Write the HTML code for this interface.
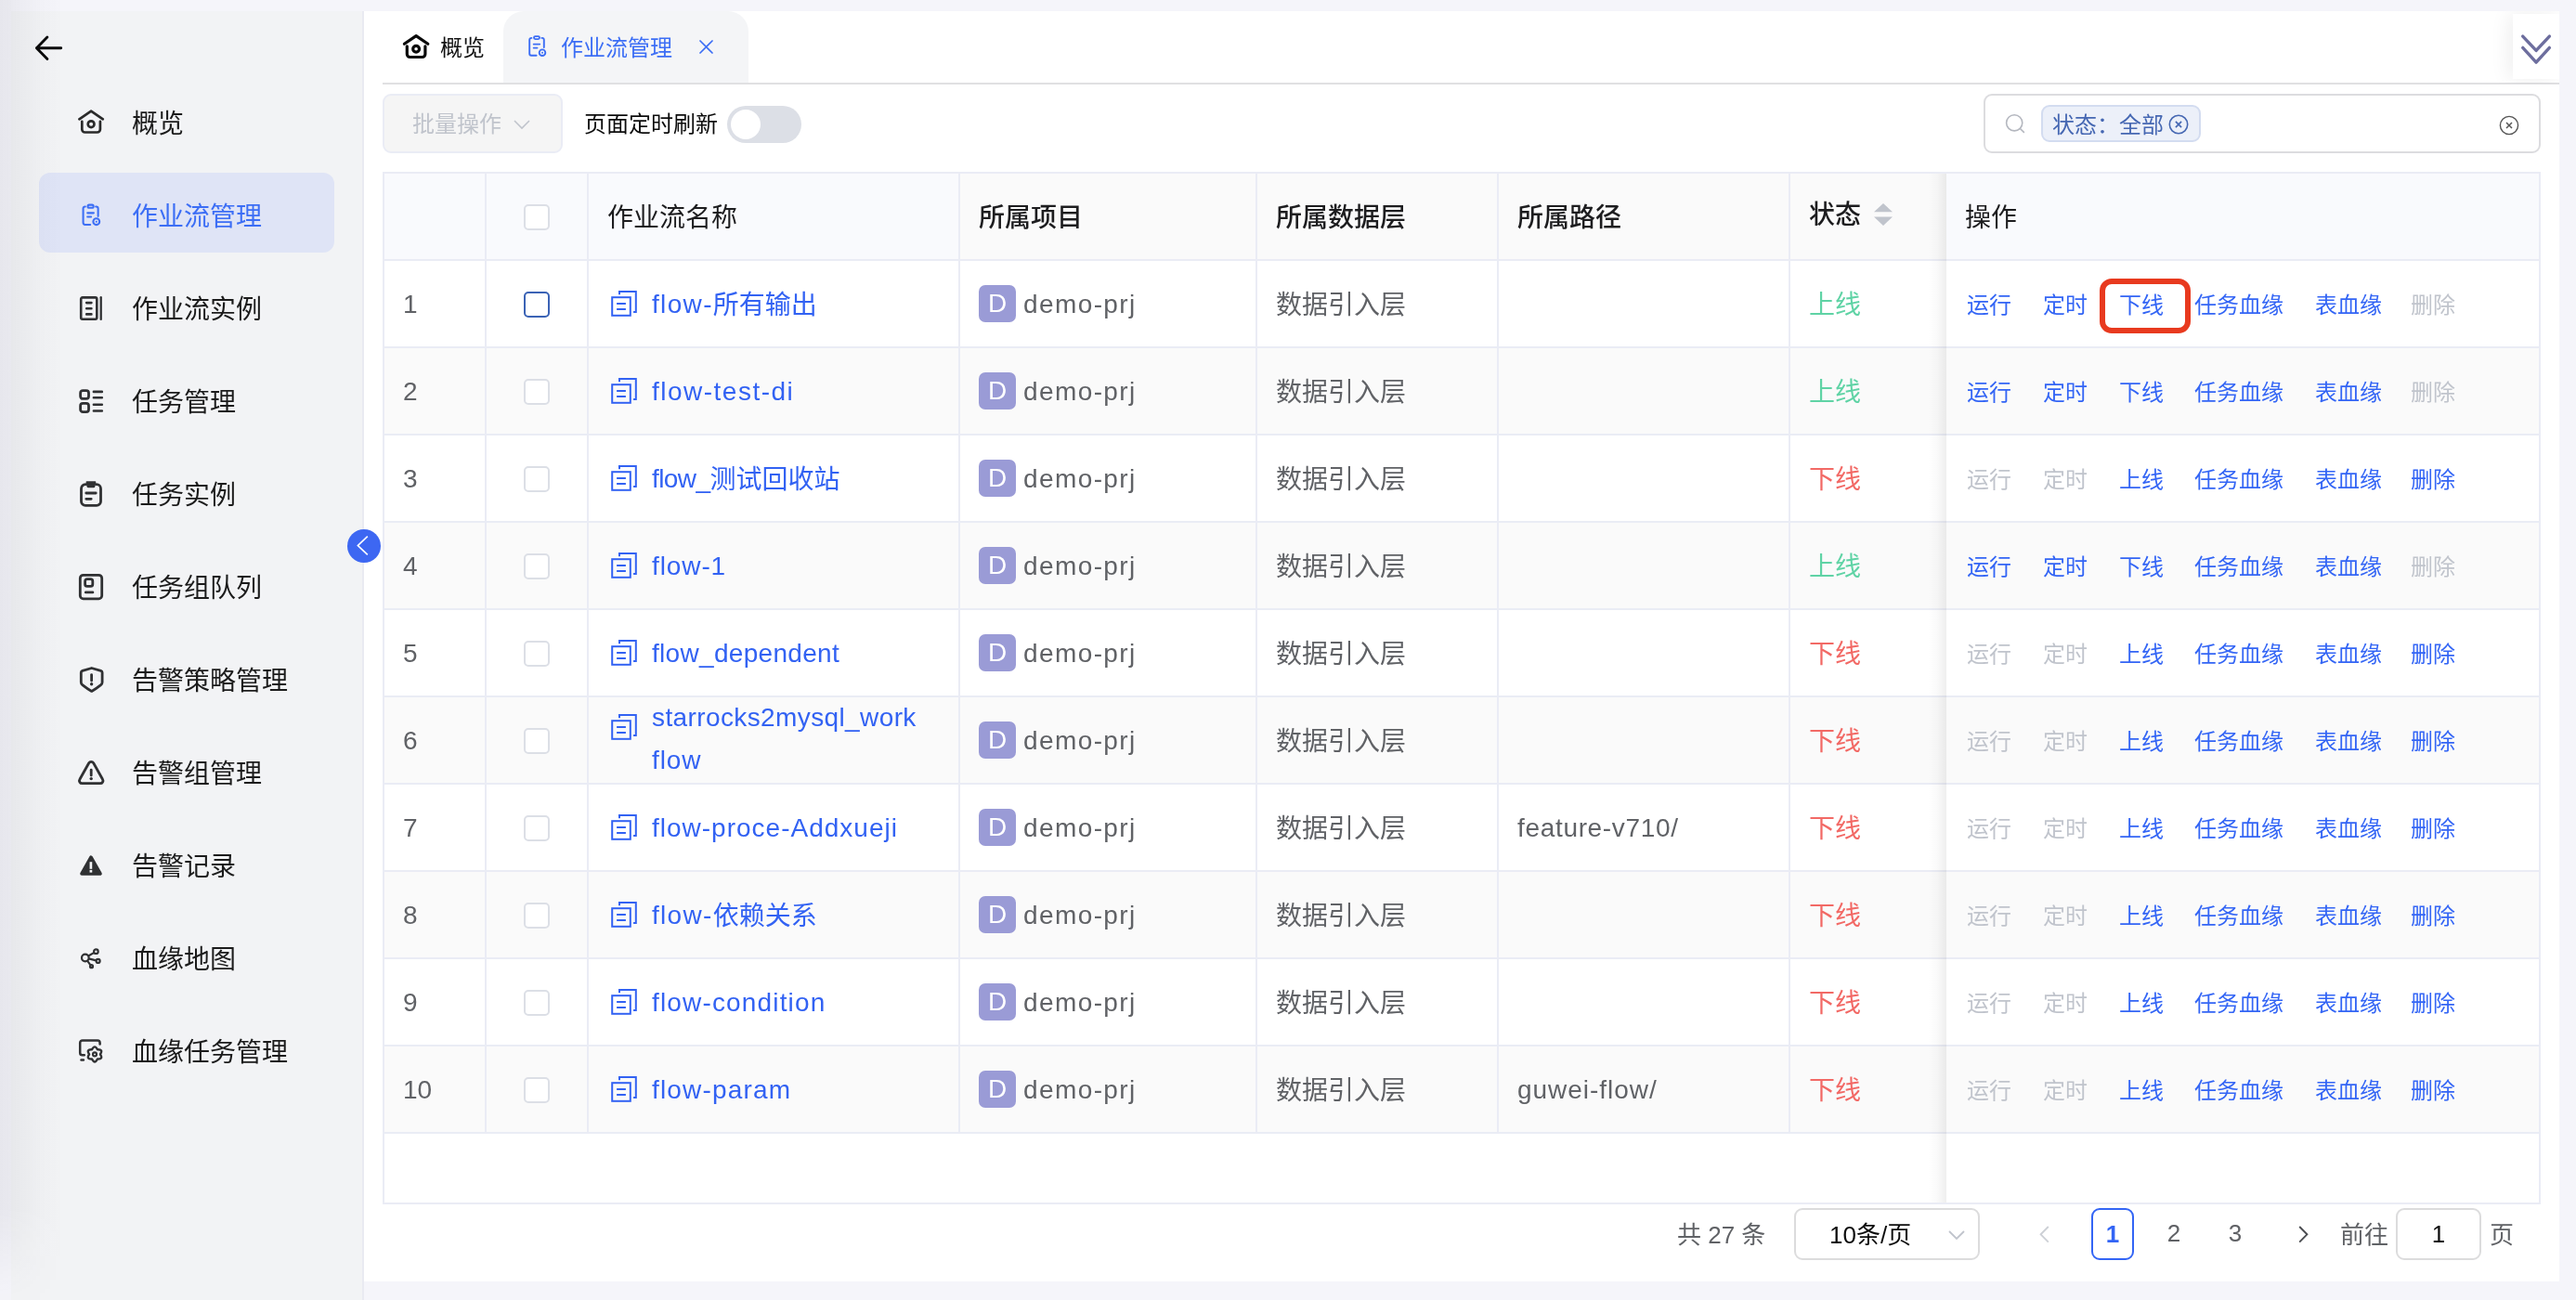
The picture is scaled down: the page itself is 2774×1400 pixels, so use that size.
<!DOCTYPE html><html lang="zh-CN"><head><meta charset="utf-8"><title>作业流管理</title><style>
html,body{margin:0;padding:0}
body{width:2774px;height:1400px;overflow:hidden;background:#f5f5fa;font-family:"Liberation Sans", "Noto Sans CJK SC", sans-serif;position:relative;color:#303133}
*{box-sizing:border-box}
#w{position:absolute;left:0;top:0;width:2774px;height:1400px;will-change:transform}
.abs{position:absolute}
svg{display:block;overflow:visible}
#side{position:absolute;left:12px;top:12px;width:380px;height:1388px;background:#f2f3f5;border-right:2px solid #e9eaf1}
#lshade{position:absolute;left:0;top:0;width:90px;height:1400px;background:linear-gradient(to right,rgba(40,40,60,.068),rgba(40,40,60,.06) 13.3%,rgba(40,40,60,.052) 13.4%,rgba(40,40,60,.03) 33%,rgba(40,40,60,.015) 50%,rgba(40,40,60,0) 76%);z-index:50;-webkit-mask-image:linear-gradient(to bottom,#000 0,#000 1300px,rgba(0,0,0,.1) 1395px);mask-image:linear-gradient(to bottom,#000 0,#000 1300px,rgba(0,0,0,.1) 1395px)}
.mi{position:absolute;left:42px;width:318px;height:86px;border-radius:12px;font-size:28px;line-height:86px;color:#1b1b1b}
.mi.on{background:#dfe4f6;color:#3c6ef5}
.mi .ic{position:absolute;left:42px;top:32px;width:28px;height:28px}
.mi .tx{position:absolute;left:100px;top:5px;white-space:nowrap}
#main{position:absolute;left:392px;top:12px;width:2364px;height:1368px;background:#fff}
#tabline{position:absolute;left:412px;top:89px;width:2344px;height:2px;background:#e0e0e2}
#tabon{position:absolute;left:542px;top:12px;width:264px;height:77px;background:#f4f5f7;border-radius:22px 22px 0 0}
.t24{font-size:24px;line-height:32px;white-space:nowrap}
.t26{font-size:26px;line-height:34px;white-space:nowrap}
.t28{font-size:28px;line-height:36px;white-space:nowrap}
#more{position:absolute;left:2706px;top:15px;width:50px;height:70px;background:#fff;box-shadow:-4px 0 22px rgba(0,0,0,.07);clip-path:inset(-3px 0 -5px -40px)}
#batch{position:absolute;left:412px;top:101px;width:194px;height:64px;border:2px solid #eaecf5;border-radius:9px;background:#f5f5f5;color:#c0c4cc}
#sw{position:absolute;left:783px;top:114px;width:80px;height:40px;border-radius:20px;background:#dcdfe6}
#sw i{position:absolute;left:4px;top:4px;width:32px;height:32px;border-radius:50%;background:#fff}
#search{position:absolute;left:2136px;top:101px;width:600px;height:64px;border:2px solid #dcdcdf;border-radius:9px;background:#fff}
#tag{position:absolute;left:2198px;top:113px;width:172px;height:40px;border:2px solid #d3dcf0;border-radius:9px;background:#ecf0f9;color:#4567b2}
#tbl{position:absolute;left:412px;top:185px;width:2324px;height:1112px;border:2px solid #eaecf5;background:#fff}
.row{position:absolute;left:0;width:2320px;height:94px;border-bottom:2px solid #eaecf5}
.row.alt{background:#fafafa}
.row.hd{background:#fafafa}
.c{position:absolute;top:0;height:92px;border-right:2px solid #eaecf5}
.c1{left:0;width:110px}.c2{left:110px;width:110px}.c3{left:220px;width:400px}.c4{left:620px;width:320px}.c5{left:940px;width:260px}.c6{left:1200px;width:314px}.c7{left:1514px;width:168px;border-right:none}
.hd .c1,.hd .c2,.hd .c3{background:#f9fafd}
.c8{position:absolute;left:1682px;top:0;width:638px;height:92px}
.hd .c8{background:#f9fafd}
.cell{position:absolute;left:20px;font-size:28px;line-height:36px;top:30px;white-space:nowrap;color:#606266}
.hd .cell{color:#1d1d1f;top:30px}
.hd .b{font-weight:500}
.cb{position:absolute;left:40px;top:33px;width:28px;height:28px;border:2px solid #dcdfe6;border-radius:5px;background:#fff}

.fic{position:absolute;left:24px;top:32px;width:28px;height:28px}
.fname{position:absolute;left:68px;top:30px;font-size:28px;line-height:36px;white-space:nowrap;color:#3262f3}
.badge{position:absolute;left:20px;top:26px;width:40px;height:40px;border-radius:7px;background:#9a9bd6;color:#fff;font-size:28px;line-height:40px;text-align:center}
.prj{position:absolute;left:68px;top:29px;font-size:28px;line-height:36px;color:#606266;white-space:nowrap;letter-spacing:1.4px}
.la{position:relative;top:-1px}
.up{color:#5fd3a5}.down{color:#f26965}
.act{position:absolute;top:32px;font-size:24px;line-height:32px;white-space:nowrap;color:#3365f5}
.act.dis{color:#c0c4cc}
#fixshade{position:absolute;left:2076px;top:187px;width:20px;height:1108px;background:linear-gradient(to right,rgba(0,0,0,0),rgba(0,0,0,.018) 50%,rgba(0,0,0,.065))}
#redbox{position:absolute;left:2261px;top:300px;width:98px;height:59px;border:6px solid #e83a1f;border-radius:13px}
#pager{position:absolute;left:0;top:0}
.pbox{position:absolute;top:1301px;height:56px;border:2px solid #dcdcdd;border-radius:9px;background:#fff}
#collapse{position:absolute;left:374px;top:570px;width:36px;height:36px;border-radius:50%;background:#3d67f2;z-index:60}
</style></head><body><div id="w">
<div id="side"></div>
<div class="abs" style="left:37px;top:38.3px"><svg width="30" height="28" viewBox="0 0 30 28" fill="none" ><path d="M28.7 13.7 H2.4 M13.9 2 L2.4 13.7 L13.9 25.4" stroke="#0a0a0a" stroke-width="2.9" stroke-linecap="round" stroke-linejoin="round"/></svg></div>
<div class="mi" style="top:86px"><span class="ic"><svg width="28" height="28" viewBox="0 0 28 28" fill="none" ><path d="M1.4 10.3 L14.1 1.6 L26.8 10.3" stroke="#2a2a2a" stroke-width="2.7" stroke-linecap="round" stroke-linejoin="round"/><path d="M4.3 12.8 V21.3 a3.2 3.2 0 0 0 3.2 3.2 H20.7 a3.2 3.2 0 0 0 3.2-3.2 V12.8" stroke="#2a2a2a" stroke-width="2.7" stroke-linecap="round" stroke-linejoin="round"/><circle cx="14.1" cy="15.7" r="3.4" stroke="#2a2a2a" stroke-width="2.7"/></svg></span><span class="tx">概览</span></div>
<div class="mi on" style="top:186px"><span class="ic"><div style="transform:translate(-0.4px,-1.2px) scale(1.03);transform-origin:14px 14px"><svg width="28" height="28" viewBox="0 0 28 28" fill="none" ><path d="M8.4 5.9 H8.2 a2 2 0 0 0-2 2 V22.8 a2 2 0 0 0 2 2 H13.6" stroke="#3c6ef5" stroke-width="2.0" stroke-linecap="round" stroke-linejoin="round"/><path d="M19.4 5.9 H19.8 a2 2 0 0 1 2 2 V16" stroke="#3c6ef5" stroke-width="2.0" stroke-linecap="round" stroke-linejoin="round"/><rect x="11" y="4.1" width="6" height="3" rx="1.5" stroke="#3c6ef5" stroke-width="2.0"/><path d="M10.7 12.6 H17.2 M10.7 16.6 H14.5" stroke="#3c6ef5" stroke-width="2.0" stroke-linecap="round"/><circle cx="20" cy="21.7" r="3.3" stroke="#3c6ef5" stroke-width="2.0"/><circle cx="20" cy="21.7" r="1" fill="#3c6ef5"/></svg></div></span><span class="tx">作业流管理</span></div>
<div class="mi" style="top:286px"><span class="ic"><svg width="28" height="28" viewBox="0 0 28 28" fill="none" ><rect x="3.2" y="2.4" width="17.1" height="23.3" rx="1.6" stroke="#303133" stroke-width="2.6"/><path d="M9.2 8.1 H14.4 M9.2 14.3 H14.4 M9.2 20.4 H14.4" stroke="#303133" stroke-width="2.6" stroke-linecap="round"/><path d="M24.7 2.2 V25.9" stroke="#303133" stroke-width="2.3" stroke-linecap="round"/></svg></span><span class="tx">作业流实例</span></div>
<div class="mi" style="top:386px"><span class="ic"><svg width="28" height="28" viewBox="0 0 28 28" fill="none" ><rect x="2.6" y="2.6" width="8.9" height="8.8" rx="2.6" stroke="#303133" stroke-width="2.8"/><rect x="2.6" y="16.4" width="8.9" height="9.2" rx="2.6" stroke="#303133" stroke-width="2.8"/><path d="M16.9 3.9 H25.8 M16.9 10.3 H25.8 M16.9 17.8 H25.8 M16.9 24.5 H25.8" stroke="#303133" stroke-width="2.6" stroke-linecap="round"/></svg></span><span class="tx">任务管理</span></div>
<div class="mi" style="top:486px"><span class="ic"><svg width="28" height="28" viewBox="0 0 28 28" fill="none" ><path d="M8.5 3.7 H8 a4.5 4.5 0 0 0-4.5 4.5 V21.9 a4.5 4.5 0 0 0 4.5 4.5 H20 a4.5 4.5 0 0 0 4.5-4.5 V8.2 a4.5 4.5 0 0 0-4.5-4.5 H19.5" stroke="#303133" stroke-width="2.8" stroke-linecap="round"/><path d="M9.6 0.2 H18.3 a1 1 0 0 1 1 1.2 L18.4 6 a1.6 1.6 0 0 1-1.5 1.2 H11 a1.6 1.6 0 0 1-1.5-1.2 L8.6 1.4 a1 1 0 0 1 1-1.2 Z" fill="#303133"/><path d="M8.8 13 H19.2 M8.8 19.3 H14.2" stroke="#303133" stroke-width="2.8" stroke-linecap="round"/></svg></span><span class="tx">任务实例</span></div>
<div class="mi" style="top:586px"><span class="ic"><svg width="28" height="29" viewBox="0 0 28 29" fill="none" ><rect x="2.3" y="1.3" width="23.4" height="25.5" rx="3.4" stroke="#303133" stroke-width="2.8"/><rect x="7.6" y="5.7" width="8.2" height="7.7" rx="2.2" stroke="#303133" stroke-width="2.8"/><path d="M8.3 19.9 H15.9" stroke="#303133" stroke-width="2.8" stroke-linecap="round"/></svg></span><span class="tx">任务组队列</span></div>
<div class="mi" style="top:686px"><span class="ic"><svg width="29" height="28" viewBox="0 0 29 28" fill="none" ><path d="M14.7 1.5 L24.6 4.3 Q26.1 4.8 26.1 6.3 V16.8 Q26.1 18.6 24.6 19.7 C21.5 22.2 18.5 24.4 14.7 26.4 C10.9 24.4 7.9 22.2 4.8 19.7 Q3.3 18.6 3.3 16.8 V6.3 Q3.3 4.8 4.8 4.3 Z" stroke="#303133" stroke-width="2.8" stroke-linejoin="round"/><path d="M14.6 8.6 V15" stroke="#303133" stroke-width="2.8" stroke-linecap="round"/><circle cx="14.6" cy="18.7" r="1.7" fill="#303133"/></svg></span><span class="tx">告警策略管理</span></div>
<div class="mi" style="top:786px"><span class="ic"><svg width="29" height="28" viewBox="0 0 29 28" fill="none" ><path d="M11.7 3.8 a2.9 2.9 0 0 1 5 0 L26.5 21.3 a2.9 2.9 0 0 1-2.5 4.4 H4.4 a2.9 2.9 0 0 1-2.5-4.4 Z" stroke="#303133" stroke-width="2.8" stroke-linejoin="round"/><path d="M14.2 11.2 V17" stroke="#303133" stroke-width="2.8" stroke-linecap="round"/><circle cx="14.2" cy="20.6" r="1.7" fill="#303133"/></svg></span><span class="tx">告警组管理</span></div>
<div class="mi" style="top:886px"><span class="ic"><svg width="28" height="28" viewBox="0 0 28 28" fill="none" ><path d="M14 5.2 L24 22.9 H4 Z" fill="#303133" stroke="#303133" stroke-width="3.6" stroke-linejoin="round"/><path d="M13.9 10.2 V17.8" stroke="#f2f3f5" stroke-width="2.7"/><rect x="12.55" y="18.9" width="2.7" height="2.7" fill="#f2f3f5"/></svg></span><span class="tx">告警记录</span></div>
<div class="mi" style="top:986px"><span class="ic"><svg width="28" height="28" viewBox="0 0 28 28" fill="none" ><circle cx="7.8" cy="13.5" r="3.8" stroke="#303133" stroke-width="2.2"/><circle cx="19.4" cy="6.7" r="2.3" stroke="#303133" stroke-width="2.2"/><circle cx="21.6" cy="16.9" r="2" stroke="#303133" stroke-width="2.2"/><circle cx="14.5" cy="22.7" r="1.5" stroke="#303133" stroke-width="2.2"/><path d="M11.1 11.5 L17.4 7.9 M11.5 14.4 L19.6 16.4 M10 16.7 L13.5 21.4" stroke="#303133" stroke-width="2.2"/></svg></span><span class="tx">血缘地图</span></div>
<div class="mi" style="top:1086px"><span class="ic"><svg width="28" height="28" viewBox="0 0 28 28" fill="none" ><path d="M23.6 6.6 V5 a2.6 2.6 0 0 0-2.6-2.6 H4.8 a2.6 2.6 0 0 0-2.6 2.6 V15.7 a2.6 2.6 0 0 0 2.6 2.6 H6.8" stroke="#303133" stroke-width="2.5" stroke-linecap="round"/><path d="M3.5 23.4 H5.9" stroke="#303133" stroke-width="2.5" stroke-linecap="round"/><path d="M15.05 12.29 Q18.00 6.40 20.95 12.29 Q27.53 11.90 23.90 17.40 Q27.53 22.90 20.95 22.51 Q18.00 28.40 15.05 22.51 Q8.47 22.90 12.10 17.40 Q8.47 11.90 15.05 12.29 Z" stroke="#303133" stroke-width="2.4" stroke-linejoin="round"/><circle cx="18" cy="17.4" r="2" stroke="#303133" stroke-width="2.1"/></svg></span><span class="tx">血缘任务管理</span></div>
<div id="collapse"><svg width="36" height="36" viewBox="0 0 36 36" fill="none" ><path d="M21.8 7.7 L11.4 17.5 L21.8 27.3" stroke="#fff" stroke-width="1.7"/></svg></div>
<div id="main"></div>
<div id="tabon"></div><div id="tabline"></div>
<div class="abs" style="left:434px;top:36.6px"><svg width="28" height="28" viewBox="0 0 28 28" fill="none" ><path d="M1.4 10.3 L14.1 1.6 L26.8 10.3" stroke="#0a0a0a" stroke-width="3.2" stroke-linecap="round" stroke-linejoin="round"/><path d="M4.3 12.8 V21.3 a3.2 3.2 0 0 0 3.2 3.2 H20.7 a3.2 3.2 0 0 0 3.2-3.2 V12.8" stroke="#0a0a0a" stroke-width="3.2" stroke-linecap="round" stroke-linejoin="round"/><circle cx="14.1" cy="15.7" r="3.4" stroke="#0a0a0a" stroke-width="3.2"/></svg></div>
<div class="abs t24" style="left:474px;top:35.5px;color:#111">概览</div>
<div class="abs" style="left:564px;top:35px"><svg width="28" height="28" viewBox="0 0 28 28" fill="none" ><path d="M8.4 5.9 H8.2 a2 2 0 0 0-2 2 V22.8 a2 2 0 0 0 2 2 H13.6" stroke="#3c6ef5" stroke-width="1.9" stroke-linecap="round" stroke-linejoin="round"/><path d="M19.4 5.9 H19.8 a2 2 0 0 1 2 2 V16" stroke="#3c6ef5" stroke-width="1.9" stroke-linecap="round" stroke-linejoin="round"/><rect x="11" y="4.1" width="6" height="3" rx="1.5" stroke="#3c6ef5" stroke-width="1.9"/><path d="M10.7 12.6 H17.2 M10.7 16.6 H14.5" stroke="#3c6ef5" stroke-width="1.9" stroke-linecap="round"/><circle cx="20" cy="21.7" r="3.3" stroke="#3c6ef5" stroke-width="1.9"/><circle cx="20" cy="21.7" r="1" fill="#3c6ef5"/></svg></div>
<div class="abs t24" style="left:604px;top:35.5px;color:#3c6ef5">作业流管理</div>
<div class="abs" style="left:753px;top:43px"><svg width="15" height="15" viewBox="0 0 15 15" fill="none" ><path d="M1 1 L14 14 M14 1 L1 14" stroke="#3c6ef5" stroke-width="1.7" stroke-linecap="round"/></svg></div>
<div id="more"><div class="abs" style="left:0;top:0"><svg width="50" height="70" viewBox="0 0 50 70" fill="none" ><path d="M10.7 24.1 L25.1 39.4 L39.4 24.1 M10.7 36.4 L25.1 52.1 L39.4 36.4" stroke="#6d6e9e" stroke-width="3.4" stroke-linecap="round" stroke-linejoin="round"/></svg></div></div>
<div id="batch"><span class="abs t24" style="left:30px;top:15px">批量操作</span><span class="abs" style="left:139px;top:25.5px"><svg width="18" height="10" viewBox="0 0 18 10" fill="none" ><path d="M1 1 L9 9 L17 1" stroke="#c0c4cc" stroke-width="1.6"/></svg></span></div>
<div class="abs t24" style="left:629px;top:118px;color:#0b0b0b">页面定时刷新</div>
<div id="sw"><i></i></div>
<div id="search"></div>
<div class="abs" style="left:2159px;top:123px"><svg width="22" height="22" viewBox="0 0 22 22" fill="none" ><circle cx="10.2" cy="9.3" r="8.6" stroke="#b4b7bf" stroke-width="1.6"/><path d="M16.4 15.5 L20.4 19.4" stroke="#b4b7bf" stroke-width="1.6" stroke-linecap="round"/></svg></div>
<div id="tag"><span class="abs t24" style="left:10px;top:4px">状态：全部</span><span class="abs" style="left:135px;top:8px"><svg width="22" height="22" viewBox="0 0 22 22" fill="none" ><circle cx="11" cy="11" r="9.7" stroke="#4567b2" stroke-width="1.6"/><path d="M7.9 7.9 L14.1 14.1 M14.1 7.9 L7.9 14.1" stroke="#4567b2" stroke-width="1.7"/></svg></span></div>
<div class="abs" style="left:2691px;top:124px"><svg width="22" height="22" viewBox="0 0 22 22" fill="none" ><circle cx="11" cy="11" r="9.6" stroke="#555" stroke-width="1.4"/><path d="M8 8 L14 14 M14 8 L8 14" stroke="#555" stroke-width="1.5"/></svg></div>
<div id="tbl">
<div class="row hd" style="top:0"><div class="c c1"></div><div class="c c2"><span class="cb"></span></div><div class="c c3"><span class="cell">作业流名称</span></div><div class="c c4"><span class="cell b">所属项目</span></div><div class="c c5"><span class="cell b">所属数据层</span></div><div class="c c6"><span class="cell b">所属路径</span></div><div class="c c7"><span class="cell b" style="top:27px">状态</span><span class="abs" style="left:89px;top:31.6px"><svg width="22" height="26" viewBox="0 0 22 26" fill="none" ><path d="M11 0 L21 9.3 H1 Z M11 24 L21 14.6 H1 Z" fill="#c0c4cc"/></svg></span></div><div class="c8"><span class="cell">操作</span></div></div>
<div class="row" style="top:94px"><div class="c c1"><span class="cell" style="top:29px">1</span></div><div class="c c2"><span class="cb" style="border-color:#3b63b5"></span></div><div class="c c3"><span class="fic"><svg width="28" height="28" viewBox="0 0 28 28" fill="none" ><rect x="1.2" y="7.2" width="19.6" height="19.6" stroke="#3262f3" stroke-width="2"/><path d="M9 4.2 V1.1 H26.8 V23 H24.1" stroke="#3262f3" stroke-width="2"/><path d="M6.1 14 H15.9 M6.1 20 H15.9" stroke="#3262f3" stroke-width="2"/></svg></span><span class="fname"><span class="la" style="letter-spacing:1.34px">flow-</span>所有输出</span></div><div class="c c4"><span class="badge">D</span><span class="prj">demo-prj</span></div><div class="c c5"><span class="cell">数据引入层</span></div><div class="c c6"><span class="cell"></span></div><div class="c c7"><span class="cell up">上线</span></div><div class="c8"><span class="act" style="left:22px">运行</span><span class="act" style="left:104px">定时</span><span class="act" style="left:186px">下线</span><span class="act" style="left:267px">任务血缘</span><span class="act" style="left:397px">表血缘</span><span class="act dis" style="left:500px">删除</span></div></div>
<div class="row alt" style="top:188px"><div class="c c1"><span class="cell" style="top:29px">2</span></div><div class="c c2"><span class="cb"></span></div><div class="c c3"><span class="fic"><svg width="28" height="28" viewBox="0 0 28 28" fill="none" ><rect x="1.2" y="7.2" width="19.6" height="19.6" stroke="#3262f3" stroke-width="2"/><path d="M9 4.2 V1.1 H26.8 V23 H24.1" stroke="#3262f3" stroke-width="2"/><path d="M6.1 14 H15.9 M6.1 20 H15.9" stroke="#3262f3" stroke-width="2"/></svg></span><span class="fname"><span class="la" style="letter-spacing:1.49px">flow-test-di</span></span></div><div class="c c4"><span class="badge">D</span><span class="prj">demo-prj</span></div><div class="c c5"><span class="cell">数据引入层</span></div><div class="c c6"><span class="cell"></span></div><div class="c c7"><span class="cell up">上线</span></div><div class="c8"><span class="act" style="left:22px">运行</span><span class="act" style="left:104px">定时</span><span class="act" style="left:186px">下线</span><span class="act" style="left:267px">任务血缘</span><span class="act" style="left:397px">表血缘</span><span class="act dis" style="left:500px">删除</span></div></div>
<div class="row" style="top:282px"><div class="c c1"><span class="cell" style="top:29px">3</span></div><div class="c c2"><span class="cb"></span></div><div class="c c3"><span class="fic"><svg width="28" height="28" viewBox="0 0 28 28" fill="none" ><rect x="1.2" y="7.2" width="19.6" height="19.6" stroke="#3262f3" stroke-width="2"/><path d="M9 4.2 V1.1 H26.8 V23 H24.1" stroke="#3262f3" stroke-width="2"/><path d="M6.1 14 H15.9 M6.1 20 H15.9" stroke="#3262f3" stroke-width="2"/></svg></span><span class="fname"><span class="la" style="letter-spacing:-0.6px">flow_</span>测试回收站</span></div><div class="c c4"><span class="badge">D</span><span class="prj">demo-prj</span></div><div class="c c5"><span class="cell">数据引入层</span></div><div class="c c6"><span class="cell"></span></div><div class="c c7"><span class="cell down">下线</span></div><div class="c8"><span class="act dis" style="left:22px">运行</span><span class="act dis" style="left:104px">定时</span><span class="act" style="left:186px">上线</span><span class="act" style="left:267px">任务血缘</span><span class="act" style="left:397px">表血缘</span><span class="act" style="left:500px">删除</span></div></div>
<div class="row alt" style="top:376px"><div class="c c1"><span class="cell" style="top:29px">4</span></div><div class="c c2"><span class="cb"></span></div><div class="c c3"><span class="fic"><svg width="28" height="28" viewBox="0 0 28 28" fill="none" ><rect x="1.2" y="7.2" width="19.6" height="19.6" stroke="#3262f3" stroke-width="2"/><path d="M9 4.2 V1.1 H26.8 V23 H24.1" stroke="#3262f3" stroke-width="2"/><path d="M6.1 14 H15.9 M6.1 20 H15.9" stroke="#3262f3" stroke-width="2"/></svg></span><span class="fname"><span class="la" style="letter-spacing:0.9px">flow-1</span></span></div><div class="c c4"><span class="badge">D</span><span class="prj">demo-prj</span></div><div class="c c5"><span class="cell">数据引入层</span></div><div class="c c6"><span class="cell"></span></div><div class="c c7"><span class="cell up">上线</span></div><div class="c8"><span class="act" style="left:22px">运行</span><span class="act" style="left:104px">定时</span><span class="act" style="left:186px">下线</span><span class="act" style="left:267px">任务血缘</span><span class="act" style="left:397px">表血缘</span><span class="act dis" style="left:500px">删除</span></div></div>
<div class="row" style="top:470px"><div class="c c1"><span class="cell" style="top:29px">5</span></div><div class="c c2"><span class="cb"></span></div><div class="c c3"><span class="fic"><svg width="28" height="28" viewBox="0 0 28 28" fill="none" ><rect x="1.2" y="7.2" width="19.6" height="19.6" stroke="#3262f3" stroke-width="2"/><path d="M9 4.2 V1.1 H26.8 V23 H24.1" stroke="#3262f3" stroke-width="2"/><path d="M6.1 14 H15.9 M6.1 20 H15.9" stroke="#3262f3" stroke-width="2"/></svg></span><span class="fname"><span class="la" style="letter-spacing:0.31px">flow_dependent</span></span></div><div class="c c4"><span class="badge">D</span><span class="prj">demo-prj</span></div><div class="c c5"><span class="cell">数据引入层</span></div><div class="c c6"><span class="cell"></span></div><div class="c c7"><span class="cell down">下线</span></div><div class="c8"><span class="act dis" style="left:22px">运行</span><span class="act dis" style="left:104px">定时</span><span class="act" style="left:186px">上线</span><span class="act" style="left:267px">任务血缘</span><span class="act" style="left:397px">表血缘</span><span class="act" style="left:500px">删除</span></div></div>
<div class="row alt" style="top:564px"><div class="c c1"><span class="cell" style="top:29px">6</span></div><div class="c c2"><span class="cb"></span></div><div class="c c3"><span class="fic" style="top:18px"><svg width="28" height="28" viewBox="0 0 28 28" fill="none" ><rect x="1.2" y="7.2" width="19.6" height="19.6" stroke="#3262f3" stroke-width="2"/><path d="M9 4.2 V1.1 H26.8 V23 H24.1" stroke="#3262f3" stroke-width="2"/><path d="M6.1 14 H15.9 M6.1 20 H15.9" stroke="#3262f3" stroke-width="2"/></svg></span><span class="fname" style="top:0;line-height:46px"><span class="la" style="letter-spacing:0.39px">starrocks2mysql_work</span><br><span class="la" style="letter-spacing:0.87px">flow</span></span></div><div class="c c4"><span class="badge">D</span><span class="prj">demo-prj</span></div><div class="c c5"><span class="cell">数据引入层</span></div><div class="c c6"><span class="cell"></span></div><div class="c c7"><span class="cell down">下线</span></div><div class="c8"><span class="act dis" style="left:22px">运行</span><span class="act dis" style="left:104px">定时</span><span class="act" style="left:186px">上线</span><span class="act" style="left:267px">任务血缘</span><span class="act" style="left:397px">表血缘</span><span class="act" style="left:500px">删除</span></div></div>
<div class="row" style="top:658px"><div class="c c1"><span class="cell" style="top:29px">7</span></div><div class="c c2"><span class="cb"></span></div><div class="c c3"><span class="fic"><svg width="28" height="28" viewBox="0 0 28 28" fill="none" ><rect x="1.2" y="7.2" width="19.6" height="19.6" stroke="#3262f3" stroke-width="2"/><path d="M9 4.2 V1.1 H26.8 V23 H24.1" stroke="#3262f3" stroke-width="2"/><path d="M6.1 14 H15.9 M6.1 20 H15.9" stroke="#3262f3" stroke-width="2"/></svg></span><span class="fname"><span class="la" style="letter-spacing:1.0px">flow-proce-Addxueji</span></span></div><div class="c c4"><span class="badge">D</span><span class="prj">demo-prj</span></div><div class="c c5"><span class="cell">数据引入层</span></div><div class="c c6"><span class="cell"><span class="la" style="letter-spacing:0.67px">feature-v710/</span></span></div><div class="c c7"><span class="cell down">下线</span></div><div class="c8"><span class="act dis" style="left:22px">运行</span><span class="act dis" style="left:104px">定时</span><span class="act" style="left:186px">上线</span><span class="act" style="left:267px">任务血缘</span><span class="act" style="left:397px">表血缘</span><span class="act" style="left:500px">删除</span></div></div>
<div class="row alt" style="top:752px"><div class="c c1"><span class="cell" style="top:29px">8</span></div><div class="c c2"><span class="cb"></span></div><div class="c c3"><span class="fic"><svg width="28" height="28" viewBox="0 0 28 28" fill="none" ><rect x="1.2" y="7.2" width="19.6" height="19.6" stroke="#3262f3" stroke-width="2"/><path d="M9 4.2 V1.1 H26.8 V23 H24.1" stroke="#3262f3" stroke-width="2"/><path d="M6.1 14 H15.9 M6.1 20 H15.9" stroke="#3262f3" stroke-width="2"/></svg></span><span class="fname"><span class="la" style="letter-spacing:1.3px">flow-</span>依赖关系</span></div><div class="c c4"><span class="badge">D</span><span class="prj">demo-prj</span></div><div class="c c5"><span class="cell">数据引入层</span></div><div class="c c6"><span class="cell"></span></div><div class="c c7"><span class="cell down">下线</span></div><div class="c8"><span class="act dis" style="left:22px">运行</span><span class="act dis" style="left:104px">定时</span><span class="act" style="left:186px">上线</span><span class="act" style="left:267px">任务血缘</span><span class="act" style="left:397px">表血缘</span><span class="act" style="left:500px">删除</span></div></div>
<div class="row" style="top:846px"><div class="c c1"><span class="cell" style="top:29px">9</span></div><div class="c c2"><span class="cb"></span></div><div class="c c3"><span class="fic"><svg width="28" height="28" viewBox="0 0 28 28" fill="none" ><rect x="1.2" y="7.2" width="19.6" height="19.6" stroke="#3262f3" stroke-width="2"/><path d="M9 4.2 V1.1 H26.8 V23 H24.1" stroke="#3262f3" stroke-width="2"/><path d="M6.1 14 H15.9 M6.1 20 H15.9" stroke="#3262f3" stroke-width="2"/></svg></span><span class="fname"><span class="la" style="letter-spacing:1.16px">flow-condition</span></span></div><div class="c c4"><span class="badge">D</span><span class="prj">demo-prj</span></div><div class="c c5"><span class="cell">数据引入层</span></div><div class="c c6"><span class="cell"></span></div><div class="c c7"><span class="cell down">下线</span></div><div class="c8"><span class="act dis" style="left:22px">运行</span><span class="act dis" style="left:104px">定时</span><span class="act" style="left:186px">上线</span><span class="act" style="left:267px">任务血缘</span><span class="act" style="left:397px">表血缘</span><span class="act" style="left:500px">删除</span></div></div>
<div class="row alt" style="top:940px"><div class="c c1"><span class="cell" style="top:29px">10</span></div><div class="c c2"><span class="cb"></span></div><div class="c c3"><span class="fic"><svg width="28" height="28" viewBox="0 0 28 28" fill="none" ><rect x="1.2" y="7.2" width="19.6" height="19.6" stroke="#3262f3" stroke-width="2"/><path d="M9 4.2 V1.1 H26.8 V23 H24.1" stroke="#3262f3" stroke-width="2"/><path d="M6.1 14 H15.9 M6.1 20 H15.9" stroke="#3262f3" stroke-width="2"/></svg></span><span class="fname"><span class="la" style="letter-spacing:1.18px">flow-param</span></span></div><div class="c c4"><span class="badge">D</span><span class="prj">demo-prj</span></div><div class="c c5"><span class="cell">数据引入层</span></div><div class="c c6"><span class="cell"><span class="la" style="letter-spacing:0.96px">guwei-flow/</span></span></div><div class="c c7"><span class="cell down">下线</span></div><div class="c8"><span class="act dis" style="left:22px">运行</span><span class="act dis" style="left:104px">定时</span><span class="act" style="left:186px">上线</span><span class="act" style="left:267px">任务血缘</span><span class="act" style="left:397px">表血缘</span><span class="act" style="left:500px">删除</span></div></div>
</div>
<div id="fixshade"></div>
<div id="redbox"></div>
<div class="abs t26" style="left:1806px;top:1313px;color:#606266">共 27 条</div>
<div class="pbox" style="left:1932px;width:200px"><span class="abs t26" style="left:36px;top:10px;color:#0b0b0b">10条/页</span><span class="abs" style="left:164px;top:22px"><svg width="18" height="10" viewBox="0 0 18 10" fill="none" ><path d="M1 1 L9 9 L17 1" stroke="#c0c4cc" stroke-width="1.8"/></svg></span></div>
<div class="abs" style="left:2196px;top:1320px"><svg width="11" height="19" viewBox="0 0 11 19" fill="none" ><path d="M9.8 1 L1.6 9.3 L9.8 17.6" stroke="#cdd0d6" stroke-width="1.9"/></svg></div>
<div class="pbox" style="left:2252px;width:46px;border-color:#3365f5"><span class="abs t26" style="left:0;width:42px;text-align:center;top:9px;color:#3365f5;font-weight:bold">1</span></div>
<div class="abs t26" style="left:2321px;width:40px;text-align:center;top:1311px;color:#606266">2</div>
<div class="abs t26" style="left:2387px;width:40px;text-align:center;top:1311px;color:#606266">3</div>
<div class="abs" style="left:2474.5px;top:1320px"><svg width="11" height="19" viewBox="0 0 11 19" fill="none" ><path d="M1.2 1 L9.4 9.3 L1.2 17.6" stroke="#4a4c50" stroke-width="1.9"/></svg></div>
<div class="abs t26" style="left:2520px;top:1313px;color:#606266">前往</div>
<div class="pbox" style="left:2580px;width:92px"><span class="abs t26" style="left:0;width:88px;text-align:center;top:9px;color:#0b0b0b">1</span></div>
<div class="abs t26" style="left:2681px;top:1313px;color:#606266">页</div>
<div id="lshade"></div>
</div></body></html>
